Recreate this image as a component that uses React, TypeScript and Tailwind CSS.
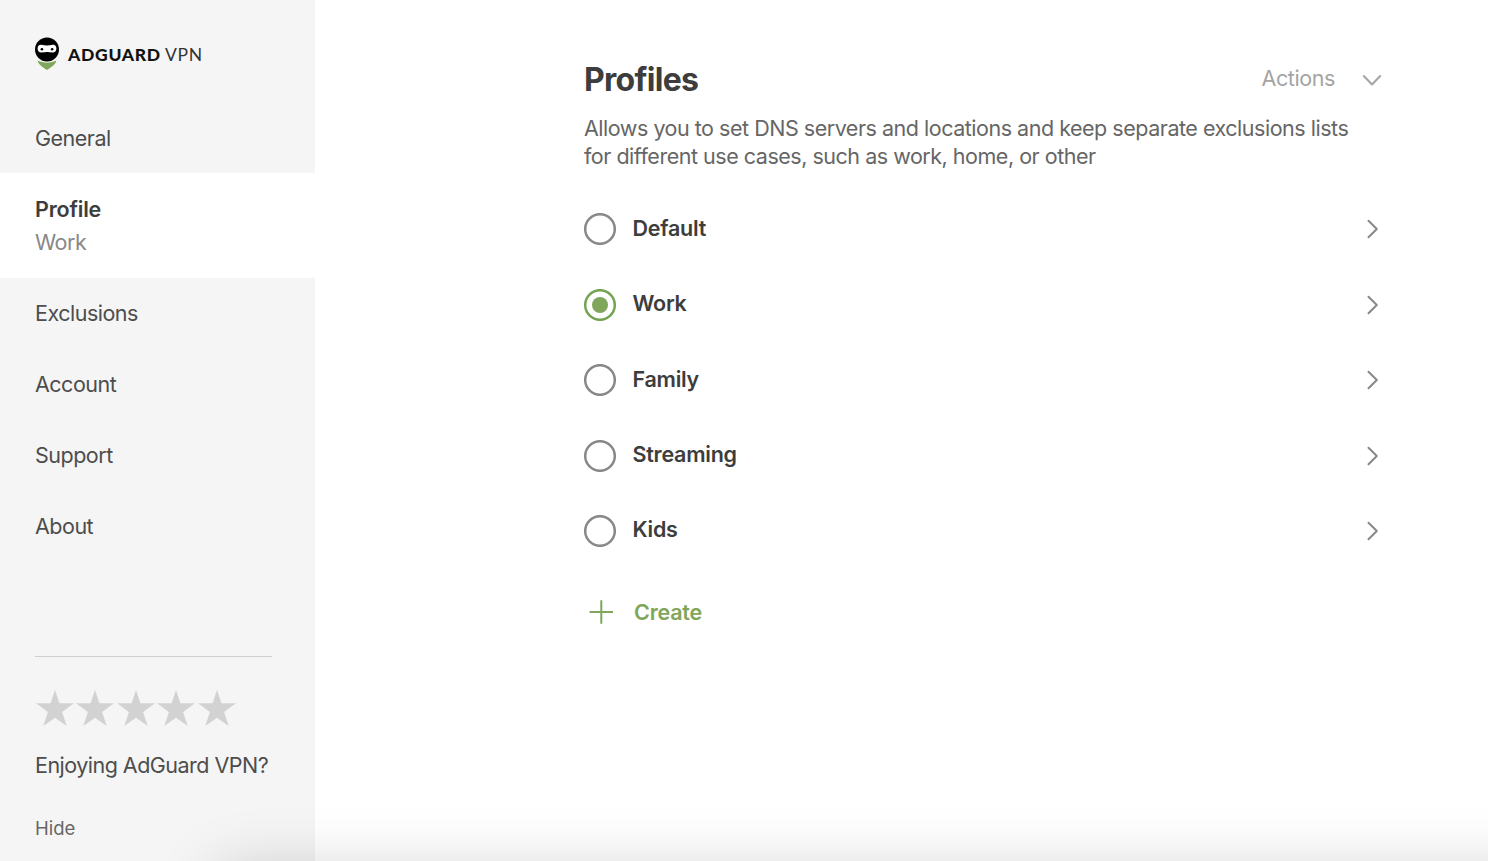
import { useState } from "react";

const PROFILES = ["Default", "Work", "Family", "Streaming", "Kids"];
const LINKS = ["Exclusions", "Account", "Support", "About"];

function Logo() {
  return (
    <div className="flex h-[33px] items-center">
      <svg className="h-[33px] w-6" viewBox="0 0 24 33" fill="none">
        <path d="M2.800 23.500c6 2.800 12.400 2.800 18.400 0-.2 3.500-3.600 6-9.200 9.400-5.600-3.400-9-5.900-9.200-9.400Z" fill="#7fa65a" />
        <circle cx="12" cy="12.500" r="12.700" fill="#f5f5f5" />
        <circle cx="12" cy="12.500" r="12" fill="#000" />
        <path d="M6.500 7.800c3.600.9 7.400.9 11 0 2.300-.4 3.900 1.200 3.900 3.700 0 2.400-1.500 4.100-3.800 4.100-3.700-.8-7.500-.8-11.200 0-2.300 0-3.800-1.700-3.800-4.100 0-2.500 1.600-4.100 3.900-3.700Z" fill="#fff" />
        <circle cx="6.900" cy="12.300" r="1.300" fill="#000" />
        <circle cx="17.100" cy="12.300" r="1.300" fill="#000" />
      </svg>
      <span className="mt-0.5 ml-[9px] font-[Lato] text-[17.5px] leading-none font-black tracking-[0.7px] whitespace-nowrap text-[#131313]">
        ADGUARD
      </span>
      <span className="mt-0.5 ml-1 font-[Lato] text-[17.5px] leading-none tracking-[0.7px] whitespace-nowrap text-[#333]">
        VPN
      </span>
    </div>
  );
}

function Star() {
  return (
    <svg className="h-9 w-[38px]" viewBox="0 0 38 36" fill="#d2d2d2">
      <path d="M19 0l4.400 13.300H38l-11.900 8.700L30.700 36 19 27.700 7.300 36l4.600-14L0 13.300h14.600z" />
    </svg>
  );
}

function Sidebar() {
  return (
    <aside className="flex w-[315px] shrink-0 flex-col bg-[#f5f5f5] pt-[37px]">
      <div className="pl-[35px]">
        <Logo />
      </div>
      <nav className="mt-8 flex flex-col text-[21.5px] leading-[27px] tracking-[-0.5px] text-[#4d4d4d]">
        <a className="flex h-[71px] items-center pt-px pl-[35px]">General</a>
        <a className="flex h-[105px] flex-col bg-white pt-[23px] pl-[35px]">
          <span className="font-semibold tracking-[-0.2px] text-[#3d3d3d]">Profile</span>
          <span className="mt-1.5 text-[#888]">Work</span>
        </a>
        {LINKS.map((label) => (
          <a key={label} className="flex h-[71px] items-center pl-[35px]">
            {label}
          </a>
        ))}
      </nav>

      {/* Rate block */}
      <div className="mt-[94px] ml-[35px] w-[237px] border-t border-[#cfcfcf]">
        <div className="mt-[33px] ml-px flex gap-[2.4px]">
          {[1, 2, 3, 4, 5].map((n) => (
            <Star key={n} />
          ))}
        </div>
        <p className="mt-[26px] text-[21.5px] leading-[27px] tracking-[-0.52px] whitespace-nowrap text-[#4d4d4d]">
          Enjoying AdGuard VPN?
        </p>
        <button className="mt-[37px] block text-[18.5px] leading-6 text-[#666]">Hide</button>
      </div>
    </aside>
  );
}

export default function App() {
  const [active, setActive] = useState("Work");

  return (
    <div className="relative flex h-[861px] w-[1488px] overflow-hidden bg-white font-[Inter,sans-serif]">
      <Sidebar />
      <main className="ml-[269px] w-[800px] pt-[58px]">
        <div className="flex h-[42px] items-center justify-between">
          <h1 className="pt-px text-[32px] leading-[42px] font-bold tracking-[-0.7px] text-[#3d3d3d]">Profiles</h1>
          <button className="mr-0.5 flex items-center text-[21.5px] tracking-[-0.4px] text-[#a4a4a4]">
            <span className="mb-0.5">Actions</span>
            <svg className="mt-0.5 ml-[27px] h-5 w-5" viewBox="0 0 20 20" fill="none" stroke="currentColor" strokeWidth="2" strokeLinecap="round" strokeLinejoin="round">
              <path d="M1.800 6l8.200 8.500L18.200 6" />
            </svg>
          </button>
        </div>
        <p className="mt-3.5 text-[21.5px] leading-[28px] tracking-[-0.48px] whitespace-nowrap text-[#666]">
          Allows you to set DNS servers and locations and keep separate exclusions lists
          <br />
          for different use cases, such as work, home, or other
        </p>

        <ul className="mt-[21.7px]">
          {PROFILES.map((name) => (
            <li key={name} className="flex h-[75.4px] items-center" onClick={() => setActive(name)}>
              <svg className="h-8 w-8" viewBox="0 0 32 32" fill="none">
                <circle cx="16" cy="16" r="14.800" stroke={name === active ? "#74a352" : "#888"} strokeWidth="2.500" />
                {name === active && <circle cx="16" cy="16" r="8" fill="#7fa65a" />}
              </svg>
              <span className="mb-0.5 ml-[16.5px] text-[21.5px] leading-[27px] font-semibold tracking-[-0.25px] text-[#3d3d3d]">
                {name}
              </span>
              <svg className="mr-1 ml-auto h-5 w-[14px]" viewBox="0 0 14 20" fill="none" stroke="#888" strokeWidth="2" strokeLinecap="round" strokeLinejoin="round">
                <path d="M2.500 1.700l8.300 8.300-8.300 8.300" />
              </svg>
            </li>
          ))}
        </ul>

        <button className="mt-[30.3px] flex items-center text-[21.5px] leading-[27px] font-semibold tracking-[-0.2px] text-[#7fa65a]">
          <svg className="ml-[5px] h-6 w-6" viewBox="0 0 24 24" fill="none" stroke="currentColor" strokeWidth="2" strokeLinecap="round">
            <path d="M12.300 1v22M1.300 12h22" />
          </svg>
          <span className="ml-[21px]">Create</span>
        </button>
      </main>

      {/* Shadow of the panel below */}
      <div className="pointer-events-none absolute top-[872px] left-[218px] h-[200px] w-[1500px] shadow-[0_0_60px_rgba(0,0,0,0.2)]" />
    </div>
  );
}
